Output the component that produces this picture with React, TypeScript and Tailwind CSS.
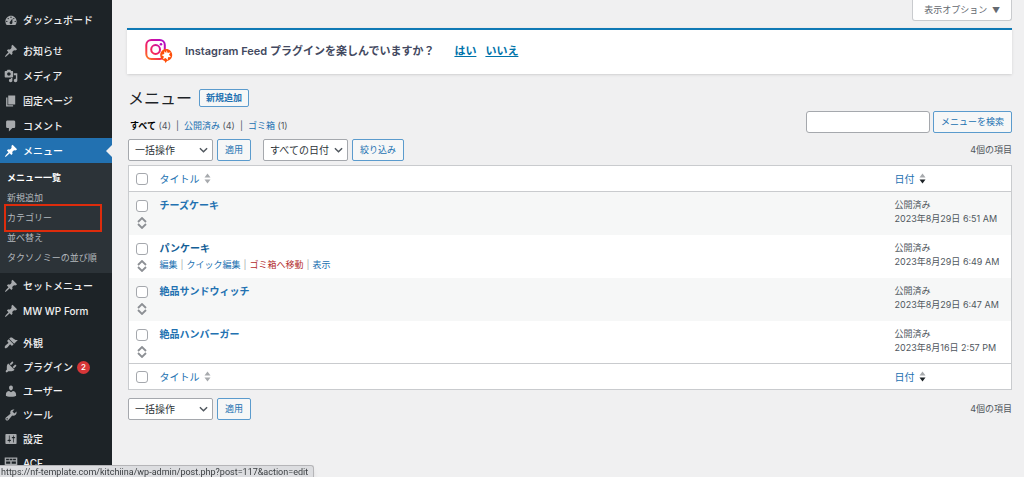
import React from 'react'

const PIN = 'M10.44 3.02l1.82-1.82 6.36 6.35-1.83 1.82c-1.05-.68-2.48-.57-3.41.36l-.75.75c-.92.93-1.04 2.35-.35 3.41l-1.83 1.82-2.41-2.41-2.8 2.79c-.42.42-3.38 2.71-3.8 2.29s1.86-3.39 2.28-3.81l2.79-2.79L4.1 9.36l1.83-1.82c1.05.69 2.48.57 3.4-.36l.75-.75c.93-.92 1.05-2.35.36-3.41z'

const topItems = [
    {
        label: 'お知らせ',
        icon: PIN
    },
    {
        label: 'メディア',
        icon: 'M13 11V4c0-.55-.45-1-1-1h-1.67L9 1H5L3.67 3H2c-.55 0-1 .45-1 1v7c0 .55.45 1 1 1h10c.55 0 1-.45 1-1zM7 4.5c1.38 0 2.5 1.12 2.5 2.5S8.38 9.5 7 9.5 4.5 8.38 4.5 7 5.62 4.5 7 4.5zM14 6h5v10.5c0 1.38-1.12 2.5-2.5 2.5S14 17.88 14 16.5s1.12-2.5 2.5-2.5c.17 0 .34.02.5.05V9h-3V6zm-4 8.05V13h2v3.5c0 1.38-1.12 2.5-2.5 2.5S7 17.88 7 16.5 8.12 14 9.5 14c.17 0 .34.02.5.05z'
    },
    {
        label: '固定ページ',
        icon: 'M6 15V2h10v13H6zm-1 1h8v2H3V5h2v11z'
    },
    {
        label: 'コメント',
        icon: 'M5 2h9c1.1 0 2 .9 2 2v7c0 1.1-.9 2-2 2h-2l-5 5v-5H5c-1.1 0-2-.9-2-2V4c0-1.1.9-2 2-2z'
    }
]

const customItems = [
    { label: 'セットメニュー', icon: PIN },
    { label: 'MW WP Form', icon: PIN }
]

const bottomItems = [
    {
        label: '外観',
        icon: 'M14.48 11.06L7.41 3.99l1.5-1.5c.5-.56 2.3-.47 3.51.32 1.21.8 1.43 1.28 2.91 2.1 1.18.64 2.45 1.26 4.45.85zm-.71.71L6.7 4.7 4.93 6.47c-.39.39-.39 1.02 0 1.41l1.06 1.06c.39.39.39 1.03 0 1.42-.6.6-1.43 1.11-2.21 1.69-.35.26-.7.53-1.01.84C1.43 14.23.4 16.08 1.4 17.07c.99 1 2.84-.03 4.18-1.36.31-.31.58-.66.85-1.02.57-.78 1.08-1.61 1.69-2.21.39-.39 1.02-.39 1.41 0l1.06 1.06c.39.39 1.02.39 1.41 0z'
    },
    {
        label: 'プラグイン',
        badge: 2,
        icon: 'M13.11 4.36L9.87 7.6 8 5.73l3.24-3.24c.35-.34 1.05-.2 1.56.32.52.51.66 1.21.31 1.55zm-8 1.77l.91-1.12 9.01 9.01-1.19.84c-.71.71-2.63 1.16-3.82 1.16H6.14L4.9 17.26c-.59.59-1.54.59-2.12 0-.59-.58-.59-1.53 0-2.12l1.24-1.24v-3.88c0-1.13.4-3.19 1.09-3.89zm7.26 3.97l3.24-3.24c.34-.35 1.04-.21 1.55.31.52.51.66 1.21.31 1.55l-3.24 3.25z'
    },
    {
        label: 'ユーザー',
        icon: 'M10 9.25c-2.27 0-2.73-3.44-2.73-3.44C7 4.02 7.82 2 9.97 2c2.16 0 2.98 2.02 2.71 3.81 0 0-.41 3.44-2.68 3.44zm0 2.57L12.72 10c2.39 0 4.52 2.33 4.52 4.53v2.49s-3.65 1.13-7.24 1.13c-3.65 0-7.24-1.13-7.24-1.13v-2.49c0-2.25 1.94-4.48 4.47-4.48z'
    },
    {
        label: 'ツール',
        icon: 'M16.68 9.77c-1.34 1.34-3.3 1.67-4.95.99l-5.41 6.52c-.99.99-2.59.99-3.58 0s-.99-2.59 0-3.57l6.52-5.42c-.68-1.65-.35-3.61.99-4.95 1.28-1.28 3.12-1.62 4.72-1.06l-2.89 2.89 2.82 2.82 2.86-2.87c.53 1.58.18 3.39-1.08 4.65zM3.81 16.21c.4.39 1.04.39 1.43 0 .4-.4.4-1.04 0-1.43-.39-.4-1.03-.4-1.43 0-.39.39-.39 1.03 0 1.43z'
    },
    {
        label: '設定',
        icon: 'M18 16V4c0-.55-.45-1-1-1H3c-.55 0-1 .45-1 1v12c0 .55.45 1 1 1h14c.55 0 1-.45 1-1zM8 11h1c.55 0 1 .45 1 1s-.45 1-1 1H8v1.5c0 .28-.22.5-.5.5s-.5-.22-.5-.5V13H6c-.55 0-1-.45-1-1s.45-1 1-1h1V5.5c0-.28.22-.5.5-.5s.5.22.5.5V11zm5-2h-1c-.55 0-1-.45-1-1s.45-1 1-1h1V5.5c0-.28.22-.5.5-.5s.5.22.5.5V7h1c.55 0 1 .45 1 1s-.45 1-1 1h-1v5.5c0 .28-.22.5-.5.5s-.5-.22-.5-.5V9z'
    },
    {
        label: 'ACF',
        icon: 'M1 2h18v16H1zM3 4v2h4V4zm5 0v2h4V4zm5 0v2h4V4zM3 8v3h6V8zm8 0v3h6V8zM3 13v3h6v-3zm8 0v3h6v-3z'
    }
]

const DASHBOARD = 'M3.76 17h12.48c1.1-1.37 1.76-3.11 1.76-5 0-4.42-3.58-8-8-8s-8 3.58-8 8c0 1.89.66 3.63 1.76 5zM10 5c.55 0 1 .45 1 1s-.45 1-1 1-1-.45-1-1 .45-1 1-1zM6 7c.55 0 1 .45 1 1s-.45 1-1 1-1-.45-1-1 .45-1 1-1zm8 0c.55 0 1 .45 1 1s-.45 1-1 1-1-.45-1-1 .45-1 1-1zm-5.37 5.55L12 8v6c0 1.1-.9 2-2 2s-2-.9-2-2c0-.57.24-1.08.63-1.45zM4 11c.55 0 1 .45 1 1s-.45 1-1 1-1-.45-1-1 .45-1 1-1zm12 0c.55 0 1 .45 1 1s-.45 1-1 1-1-.45-1-1 .45-1 1-1z'

const submenu = [
    { label: 'メニュー一覧', current: true },
    { label: '新規追加' },
    { label: 'カテゴリー', marked: true },
    { label: '並べ替え' },
    { label: 'タクソノミーの並び順' }
]

const posts = [
    { title: 'チーズケーキ', date: '2023年8月29日 6:51 AM' },
    { title: 'パンケーキ', date: '2023年8月29日 6:49 AM', hovered: true },
    { title: '絶品サンドウィッチ', date: '2023年8月29日 6:47 AM' },
    { title: '絶品ハンバーガー', date: '2023年8月16日 2:57 PM' }
]

const outlineButton = 'h-[22px] shrink-0 rounded-[2px] border border-[#5b9bcd] bg-[#f6f7f7] px-[7px] text-[9px] text-[#2271b1]'

const SideLink = ({ label, icon, badge }: { label: string; icon: string; badge?: number }) => (
    <a href="#" className="flex h-full items-center pl-1 text-[10px] font-medium text-[#f0f0f1]">
        <svg viewBox="0 0 20 20" className="mr-[5px] size-[14px] shrink-0 fill-[#a7aaad]" fillRule="evenodd">
            <path d={icon} />
        </svg>
        {label}
        {badge && (
            <span className="ml-1 flex size-[13px] items-center justify-center rounded-full bg-[#d63638] text-[8px] text-white">
                {badge}
            </span>
        )}
    </a>
)

const Sidebar = () => (
    <nav className="w-28 shrink-0 bg-[#1d2327]">
        <ul className="pt-[7px]">
            <li className="h-[25px]">
                <SideLink label="ダッシュボード" icon={DASHBOARD} />
            </li>
        </ul>
        <ul className="pt-[6px]">
            {topItems.map((item) => (
                <li key={item.label} className="h-[25px]">
                    <SideLink {...item} />
                </li>
            ))}
            <li>
                <a href="#" className="relative flex h-[25px] items-center bg-[#2271b1] pl-1 text-[10px] font-medium text-white">
                    <svg viewBox="0 0 20 20" className="mr-[5px] size-[14px] shrink-0 fill-white">
                        <path d={PIN} />
                    </svg>
                    メニュー
                    <span className="absolute right-0 top-1/2 -translate-y-1/2 border-y-[6px] border-r-[6px] border-y-transparent border-r-[#f0f0f1]" />
                </a>
                <ul className="bg-[#2c3338] py-[5px]">
                    {submenu.map((item) => (
                        <li key={item.label} className="relative h-5">
                            <a
                                href="#"
                                className={`flex h-full items-center whitespace-nowrap pl-[7px] text-[9px] ${item.current ? 'font-bold text-white' : 'text-[#b4b9be]'}`}
                            >
                                {item.label}
                            </a>
                            {item.marked && (
                                <span className="pointer-events-none absolute -inset-y-1 left-1 right-[10px] border-2 border-[#dd2c0c]" />
                            )}
                        </li>
                    ))}
                </ul>
            </li>
            {customItems.map((item) => (
                <li key={item.label} className="h-[25px]">
                    <SideLink {...item} />
                </li>
            ))}
        </ul>
        <ul className="pt-2">
            {bottomItems.map((item) => (
                <li key={item.label} className="h-6">
                    <SideLink {...item} />
                </li>
            ))}
        </ul>
    </nav>
)

const InstagramLogo = () => (
    <svg viewBox="0 0 28 26" className="h-[26px] w-7 shrink-0" fill="none">
        <defs>
            <linearGradient id="insta" x1="3" y1="22" x2="20" y2="2" gradientUnits="userSpaceOnUse">
                <stop offset="0" stopColor="#ff7a1a" />
                <stop offset="0.35" stopColor="#f5265c" />
                <stop offset="0.7" stopColor="#d010a0" />
                <stop offset="1" stopColor="#a80fd0" />
            </linearGradient>
        </defs>
        <rect x="1.3" y="2" width="18.500" height="19" rx="5" stroke="url(#insta)" strokeWidth="2" />
        <circle cx="10.6" cy="11.5" r="4.4" stroke="url(#insta)" strokeWidth="2" />
        <circle cx="16" cy="6.2" r="1.3" fill="#b80fc0" />
        <path d="M21.200 11c3.400 0 6 2.700 6 6 0 3.100-2.300 5.700-5.200 6l-1.500 1.900-.9-2c-2.600-.7-4.400-3-4.400-5.900 0-3.300 2.700-6 6-6z" fill="#fe4f0b" />
        <path d="M21.600 12.200l1.100 2.700 2.900-.6-1.600 2.500 1.900 2.200-2.900.3-.3 3-2-2.200-2.700 1.200.9-2.800-2.500-1.500 2.800-.9.100-2.900 1.900 1.900z" fill="#fff" />
    </svg>
)

const SelectBox = ({ label, value }: { label: string; value: string }) => (
    <div className="relative w-[85px]">
        <select
            aria-label={label}
            className="h-[22px] w-full appearance-none rounded-[2px] border border-[#a5a8ad] bg-white pl-[6px] text-[10px] text-[#2c3338]"
        >
            <option>{value}</option>
        </select>
        <svg viewBox="0 0 10 6" className="pointer-events-none absolute right-[5px] top-2 h-[6px] w-[9px]" fill="none" stroke="#50575e" strokeWidth="1.6">
            <path d="M1 1l4 4 4-4" />
        </svg>
    </div>
)

const Check = ({ label }: { label: string }) => (
    <input
        type="checkbox"
        aria-label={label}
        className="block size-3 appearance-none rounded-[3px] border border-[#a5a8ad] bg-white checked:bg-[#2271b1]"
    />
)

const SortLink = ({ label, sorted }: { label: string; sorted?: boolean }) => (
    <a href="#" className="flex items-center gap-1 text-[10px] font-normal text-[#2271b1]">
        {label}
        <svg viewBox="0 0 7 11" className="h-[11px] w-[7px]">
            <path d="M3.500 0.500L6.500 4.500h-6z" fill="#a7aaad" />
            <path d="M3.500 10.500L6.500 6.500h-6z" fill={sorted ? '#1d2327' : '#a7aaad'} />
        </svg>
    </a>
)

const HeadRow = () => (
    <tr className="h-[26px]">
        <td className="w-[31px] pl-[7px]">
            <Check label="すべて選択" />
        </td>
        <th scope="col" className="text-left">
            <SortLink label="タイトル" />
        </th>
        <th scope="col" className="w-[117px] text-left">
            <SortLink label="日付" sorted />
        </th>
    </tr>
)

const App = () => {
    return (
        <div className="flex min-h-screen bg-[#f0f0f1] font-['Inter','Noto_Sans_CJK_JP',sans-serif] text-[9px] leading-[14px] text-[#50575e]">
            <Sidebar />

            <main className="min-w-0 flex-1 pl-[15px] pr-3">
                <div className="flex justify-end">
                    <button className="h-[21px] rounded-b-[3px] border border-t-0 border-[#c9cbce] bg-white px-[11px] text-[9px] text-[#646970]">
                        表示オプション <span className="ml-[2px] text-[8px]">▼</span>
                    </button>
                </div>

                <div className="mt-[7px] flex h-[46px] items-center border-t-2 border-[#0f79b5] bg-white pb-[2px] pl-[18px] shadow-sm">
                    <InstagramLogo />
                    <p className="ml-3 text-[11px] font-semibold text-[#434960]">
                        Instagram Feed プラグインを楽しんでいますか？
                    </p>
                    <a href="#" className="ml-5 text-[11px] font-bold text-[#0073aa] underline">はい</a>
                    <a href="#" className="ml-[9px] text-[11px] font-bold text-[#0073aa] underline">いいえ</a>
                </div>

                <div className="pl-px">
                    <div className="mt-[15px] flex h-[18px] items-center">
                        <h1 className="text-base text-[#1d2327]">メニュー</h1>
                        <a
                            href="#"
                            className="ml-[7px] flex h-[18px] items-center rounded-[2px] border border-[#5b9bcd] bg-[#f6f7f7] px-[6px] text-[9px] font-bold text-[#2271b1]"
                        >
                            新規追加
                        </a>
                    </div>

                    <div className="mt-1 flex h-[22px] items-end justify-between">
                        <ul className="flex gap-[5px] pl-[2px]">
                            <li><a href="#" className="font-bold text-black">すべて</a> (4)</li>
                            <li>|</li>
                            <li><a href="#" className="text-[#2271b1]">公開済み</a> (4)</li>
                            <li>|</li>
                            <li><a href="#" className="text-[#2271b1]">ゴミ箱</a> (1)</li>
                        </ul>
                        <form className="flex gap-[3px]">
                            <input
                                type="search"
                                aria-label="メニューを検索"
                                className="h-[22px] w-[124px] rounded-[3px] border border-[#a5a8ad] bg-white px-1"
                            />
                            <button type="button" className={outlineButton}>メニューを検索</button>
                        </form>
                    </div>

                    <div className="mt-[6px] flex items-center">
                        <SelectBox label="一括操作を選択" value="一括操作" />
                        <button className={`${outlineButton} ml-1`}>適用</button>
                        <div className="ml-3">
                            <SelectBox label="日付で絞り込む" value="すべての日付" />
                        </div>
                        <button className={`${outlineButton} ml-1`}>絞り込み</button>
                        <span className="ml-auto">4個の項目</span>
                    </div>

                    <table className="mt-1 w-full border border-[#c9cbce] bg-white">
                        <thead className="border-b border-[#c9cbce]">
                            <HeadRow />
                        </thead>
                        <tbody>
                            {posts.map((post) => (
                                <tr key={post.title} className="h-[43px] align-top odd:bg-[#f6f7f7]">
                                    <td className="pl-[7px] pt-2">
                                        <Check label={`${post.title}を選択`} />
                                        <svg viewBox="0 0 10 12" className="ml-px mt-[5px] h-3 w-[10px]" fill="none" stroke="#8c8f94" strokeWidth="1.8">
                                            <path d="M1 5l4-4 4 4M1 7l4 4 4-4" />
                                        </svg>
                                    </td>
                                    <td className="pt-[6px]">
                                        <a
                                            href="#"
                                            className={`block text-[10px] font-bold ${post.hovered ? 'text-[#135e96]' : 'text-[#2271b1]'}`}
                                        >
                                            {post.title}
                                        </a>
                                        {post.hovered && (
                                            <div className="mt-[3px] flex gap-[3px] text-[#a7aaad]">
                                                <a href="#" className="text-[#2271b1]">編集</a>|
                                                <a href="#" className="text-[#2271b1]">クイック編集</a>|
                                                <a href="#" className="text-[#b32d2e]">ゴミ箱へ移動</a>|
                                                <a href="#" className="text-[#2271b1]">表示</a>
                                            </div>
                                        )}
                                    </td>
                                    <td className="whitespace-nowrap pt-[6px]">
                                        公開済み<br />
                                        {post.date}
                                    </td>
                                </tr>
                            ))}
                        </tbody>
                        <tfoot className="border-t border-[#c9cbce]">
                            <HeadRow />
                        </tfoot>
                    </table>

                    <div className="mt-2 flex items-center">
                        <SelectBox label="一括操作を選択" value="一括操作" />
                        <button className={`${outlineButton} ml-1`}>適用</button>
                        <span className="ml-auto">4個の項目</span>
                    </div>
                </div>
            </main>

            {/* browser link preview */}
            <div className="fixed bottom-0 left-0 h-3 whitespace-nowrap rounded-tr-[3px] border-r border-t border-[#b5b5b8] bg-[#dcdde0] pl-px pr-[5px] font-['Roboto',sans-serif] text-[9px] leading-3 text-[#3c4043] shadow-md">
                https://nf-template.com/kitchiina/wp-admin/post.php?post=117&amp;action=edit
            </div>
        </div>
    )
}

export default App
